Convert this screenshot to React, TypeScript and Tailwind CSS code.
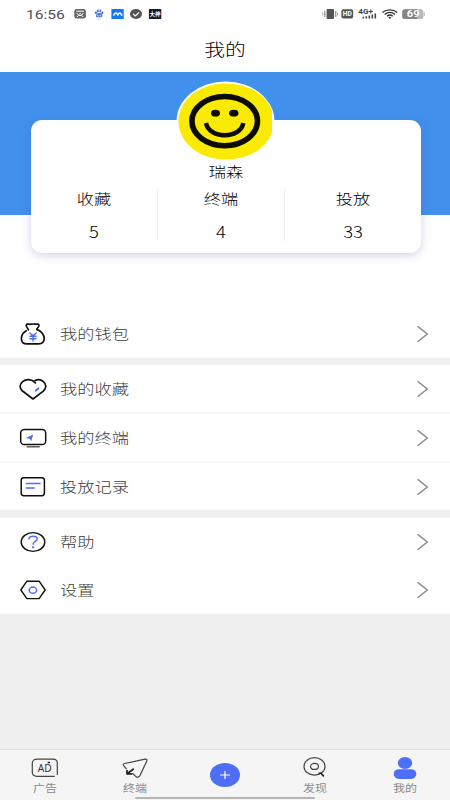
import type { ReactNode } from 'react'

type MenuItem = {
  label: string
  icon: ReactNode
  className: string
}

const ink = '#111111'
const accent = '#4f6ef7'

function WalletIcon() {
  return (
    <svg width="28" height="24" viewBox="0 0 28 24" fill="none" stroke={ink} strokeWidth="1.7" strokeLinecap="round" strokeLinejoin="round">
      <path d="M9.4 7.8 L7.6 4.6 C6.6 2.8 7.6 2 9 2.2 C11 2.6 12 2 14 2 C16 2 16.6 2.4 18.2 2.1 C20 1.9 20.4 3.2 19.6 4.6 L17.8 7.3" />
      <path d="M7.2 8.8 C4 10.8 2.4 13.6 2.4 16.4 C2.4 20 4.4 21.9 7.8 21.9 H19.6 C23.2 21.9 25.2 20 25.2 16.6 C25.2 13.2 22.6 9 18 7.6" />
      <g stroke={accent} strokeWidth="1.5">
        <path d="M10.8 11 L14 13.8 L17.2 11 M14 13.8 V19 M11 14.3 H17 M11 16.8 H17" />
      </g>
    </svg>
  )
}

function HeartIcon() {
  return (
    <svg width="28" height="24" viewBox="0 0 28 24" fill="none" stroke={ink} strokeWidth="1.7" strokeLinecap="round" strokeLinejoin="round">
      <path d="M16.4 5.8 C12.5 1.6 6.8 1.9 3.6 4.6 C0.2 7.4 0.4 11.2 3.2 13.8 L14 22 L24.6 13.8 C27.6 11.2 27.4 7 24.4 4.6 C21.6 2.2 17.6 2.2 14.6 4.4" />
      <path d="M16.8 13.6 L19.4 11.4" stroke={accent} strokeWidth="2" />
    </svg>
  )
}

function TerminalIcon() {
  return (
    <svg width="28" height="24" viewBox="0 0 28 24" fill="none">
      <rect x="1.7" y="3.5" width="25" height="15" rx="3.6" stroke={ink} strokeWidth="1.5" />
      <path d="M7.7 20.8 H20.7" stroke="#444" strokeWidth="1.3" />
      <path d="M6.6 11.9 L14.3 8.4 L12.2 15.2 L10.8 12.8 Z" fill={accent} />
    </svg>
  )
}

function RecordIcon() {
  return (
    <svg width="28" height="24" viewBox="0 0 28 24" fill="none">
      <rect x="2.2" y="2.7" width="23.2" height="18" rx="2.6" stroke={ink} strokeWidth="1.5" />
      <path d="M6.8 8.5 H21.6 M6.8 13 H15.8" stroke={accent} strokeWidth="1.6" />
    </svg>
  )
}

function HelpIcon() {
  return (
    <svg width="28" height="24" viewBox="0 0 28 24" fill="none" strokeLinecap="round">
      <ellipse cx="14" cy="12" rx="11.8" ry="9.4" stroke={ink} strokeWidth="1.4" />
      <path d="M10 9 C10 7 11.8 6.2 14.1 6.2 C16.5 6.2 18.2 7.2 18.2 9 C18.2 11.4 14.1 11.4 14.1 14.2" stroke={accent} strokeWidth="1.5" />
      <ellipse cx="14.1" cy="17.2" rx="1.3" ry="1" fill={accent} />
    </svg>
  )
}

function SettingsIcon() {
  return (
    <svg width="28" height="24" viewBox="0 0 28 24" fill="none">
      <path d="M7.9 3.2 H20.1 L26.2 12 L20.1 20.6 H7.9 L1.8 12 Z" stroke={ink} strokeWidth="1.4" strokeLinejoin="round" />
      <ellipse cx="13.9" cy="12.2" rx="3.7" ry="3.1" stroke={accent} strokeWidth="1.5" />
    </svg>
  )
}

const menu: MenuItem[] = [
  { label: '我的钱包', icon: <WalletIcon />, className: 'h-[55px] border-b-[7px] border-[#f0f0f0]' },
  { label: '我的收藏', icon: <HeartIcon />, className: 'h-[49px] border-b-2 border-[#f6f6f6]' },
  { label: '我的终端', icon: <TerminalIcon />, className: 'h-[49px] border-b-2 border-[#f6f6f6]' },
  { label: '投放记录', icon: <RecordIcon />, className: 'h-[55px] border-b-8 border-[#f0f0f0]' },
  { label: '帮助', icon: <HelpIcon />, className: 'h-12' },
  { label: '设置', icon: <SettingsIcon />, className: 'h-12' },
]

const stats = [
  { label: '收藏', value: 5, className: 'w-[126px]' },
  { label: '终端', value: 4, className: 'w-[128px] border-x border-[#ededf0]' },
  { label: '投放', value: 33, className: 'w-[136px]' },
]

function StatusBar() {
  return (
    <div className="flex h-7 items-center justify-between pl-[26px] pr-[25px] text-[#505050]">
      <div className="flex items-center">
        <span className="w-12 origin-left scale-x-[1.2] whitespace-nowrap font-[Roboto] text-[13px] leading-none">16:56</span>
        <svg width="88" height="12" viewBox="0 0 88 12" fill="none">
          <rect x="0.3" y="1" width="11.6" height="9.6" rx="2.4" fill="#666" />
          <path d="M2.4 3.2 H9.8 M3 4.8 C3.3 7.2 5 7.1 6.1 5.2 C7.2 7.1 8.9 7.2 9.2 4.8 M2.9 9 L4.4 7.5 H7.8 L9.3 9" stroke="#fff" strokeWidth="1" />
          <g fill="#3f76e6">
            <ellipse cx="21.9" cy="4.7" rx="1.2" ry="1.3" />
            <ellipse cx="23.9" cy="2.9" rx="1" ry="1.3" />
            <ellipse cx="26.4" cy="2.9" rx="1" ry="1.3" />
            <ellipse cx="28.3" cy="4.9" rx="1.1" ry="1.3" />
            <path d="M25.1 4.7 C23.8 4.7 21.9 6.6 21.9 7.9 C21.9 9.6 23.8 9.2 25.1 9.2 C26.5 9.2 28.5 9.6 28.5 7.9 C28.5 6.6 26.5 4.7 25.1 4.7" />
          </g>
          <path d="M23.6 6.8 V8 H24.8 M26 6.6 V8 H27.2" stroke="#fff" strokeWidth="0.6" />
          <path d="M23.4 11.2 H27" stroke="#f3b4b4" strokeWidth="0.7" />
          <rect x="37.4" y="1" width="12.3" height="10" fill="#1478f5" />
          <path d="M39.4 7.6 C40.2 5.8 41.5 4.8 42.4 5 C43.3 5.2 43.2 7 43.9 6.9 C44.6 6.8 44.5 5.1 45.5 5 C46.6 5 47.4 6.2 47.9 7.8" stroke="#fff" strokeWidth="1.5" />
          <ellipse cx="62" cy="6" rx="6" ry="4.9" fill="#555" />
          <path d="M59.2 6 L61.4 7.9 L65.1 4.4" stroke="#fff" strokeWidth="1.2" />
          <rect x="74.9" y="1" width="12.4" height="10" rx="0.7" fill="#111433" />
          <text x="75.6" y="8" textLength="11" lengthAdjust="spacingAndGlyphs" fontSize="5.3" fontWeight="bold" fill="#fff" fontFamily="Noto Sans CJK SC, sans-serif">大神</text>
        </svg>
      </div>
      <svg width="103" height="14" viewBox="0 0 103 14" fill="none">
        <rect x="4.6" y="2" width="7.4" height="10" rx="0.8" fill="#555" />
        <path d="M2.8 4 V10 M13.8 4 V10" stroke="#777" strokeWidth="1" />
        <path d="M0.8 5.6 V8.4 M15.5 5.6 V8.4" stroke="#999" strokeWidth="0.9" />
        <rect x="19.4" y="2.3" width="11.8" height="9.2" rx="2" fill="#555" />
        <text x="20.8" y="9.3" textLength="9" lengthAdjust="spacingAndGlyphs" fontSize="6.4" fontWeight="bold" fill="#fff" fontFamily="Roboto, sans-serif">HD</text>
        <text x="36.3" y="6.9" textLength="14.5" lengthAdjust="spacingAndGlyphs" fontSize="6.7" fontWeight="bold" fill="#444" fontFamily="Roboto, sans-serif">4G+</text>
        <path d="M41.3 9.7 V11.6 M44.3 9.2 V11.6 M47.3 8.4 V11.6 M50.3 7.4 V11.6 M53.3 6.6 V11.6" stroke="#444" strokeWidth="1.6" />
        <g stroke="#333" strokeWidth="1.3">
          <path d="M60.4 5.4 C64.2 1.9 71.4 1.9 75.2 5.4" />
          <path d="M62.6 7.4 C65.6 4.8 70 4.8 73 7.4" />
          <path d="M64.9 9.3 C66.6 7.8 69 7.8 70.7 9.3" />
        </g>
        <path d="M66.2 10.5 L67.8 9.8 L69.4 10.5 L67.8 12 Z" fill="#333" />
        <rect x="80.3" y="2.3" width="21" height="9.7" rx="2.6" fill="#b8b8b8" />
        <path d="M82.9 2.3 H95 V12 H82.9 C81.4 12 80.3 11 80.3 9.6 V4.7 C80.3 3.3 81.4 2.3 82.9 2.3" fill="#858585" />
        <path d="M102.2 5.3 V9" stroke="#aaa" strokeWidth="1" />
        <text x="84.8" y="10.2" textLength="12.7" lengthAdjust="spacingAndGlyphs" fontSize="8.4" fontWeight="bold" fill="#fff" fontFamily="Roboto, sans-serif">69</text>
      </svg>
    </div>
  )
}

function Avatar() {
  return (
    <svg className="absolute left-[145px] top-[-39px]" width="99" height="82" viewBox="0 0 99 82" fill="none">
      <ellipse cx="49.5" cy="40.2" rx="49" ry="39.7" fill="#fff" />
      <path d="M96 30 V51 C91 67.5 72 78.5 49.5 78.5 C23 78.5 2.5 61.2 2.5 40.2 C2.5 19.2 23 2.4 49.5 2.4 C72 2.4 90 13.2 96 30" fill="#fbea03" />
      <ellipse cx="48.7" cy="40.1" rx="32.8" ry="24.6" stroke="#0c0c05" strokeWidth="5.6" />
      <ellipse cx="39.5" cy="32.2" rx="4.5" ry="3.4" fill="#0c0c05" />
      <ellipse cx="57.8" cy="32.2" rx="4.7" ry="3.4" fill="#0c0c05" />
      <path d="M30 42 C31.5 49.3 39 54.3 48.5 54.3 C58.5 54.3 66 49.3 67.3 42" stroke="#0c0c05" strokeWidth="4.4" />
    </svg>
  )
}

function ProfileCard() {
  return (
    <div className="relative ml-[31px] h-[133.5px] w-[390px] rounded-[11px] bg-white pt-[42px] shadow-[0_2px_10px_rgba(75,65,170,0.25)]">
      <Avatar />
      <p className="scale-x-[1.23] text-center text-sm font-light leading-[18px] text-black">瑞森</p>
      <div className="mt-2 flex">
        {stats.map((stat) => (
          <div key={stat.label} className={`h-[53px] text-center text-sm font-light text-black ${stat.className}`}>
            <p className="scale-x-[1.23] leading-[21px]">{stat.label}</p>
            <p className="mt-[11px] scale-x-[1.15] text-base leading-[22px]">{stat.value}</p>
          </div>
        ))}
      </div>
    </div>
  )
}

function MenuRow({ item }: { item: MenuItem }) {
  return (
    <button type="button" className={`flex w-full items-center bg-white pl-[19px] pr-[21px] text-left ${item.className}`}>
      {item.icon}
      <span className="ml-[13px] origin-left scale-x-[1.23] pb-0.5 text-sm font-light leading-5 text-[#3c3c3c]">{item.label}</span>
      <svg className="ml-auto" width="13" height="18" viewBox="0 0 13 18" fill="none">
        <path d="M1.6 1.2 L11.3 9 L1.6 16.8" stroke="#858585" strokeWidth="1.4" />
      </svg>
    </button>
  )
}

function TabLabel({ children }: { children: string }) {
  return <span className="scale-x-[1.2] text-[10px] leading-3 text-[#8a8a8a]">{children}</span>
}

function TabBar() {
  return (
    <nav className="relative flex h-[51px] border-t border-[#dedede] bg-[#f5f5f5]">
      <div className="flex w-[90px] flex-col items-center pt-[5px]">
        <svg width="28" height="27" viewBox="0 0 28 27" fill="none" stroke="#444" strokeWidth="1.2">
          <path d="M23.8 21.3 H6 C3.1 21.3 1.3 19.9 1.3 17.6 V8 C1.3 5.6 3.2 4.1 6 4.1 H21.8 C24.7 4.1 26.3 5.6 26.3 8 V20" />
          <text x="6.8" y="17.4" textLength="14" lengthAdjust="spacingAndGlyphs" fontSize="10.8" fill="#333" stroke="none" fontFamily="Noto Sans, sans-serif">AD</text>
          <ellipse cx="17.8" cy="7.5" rx="1.3" ry="1" fill="#333" stroke="none" />
        </svg>
        <TabLabel>广告</TabLabel>
      </div>
      <div className="flex w-[90px] flex-col items-center pt-[5px]">
        <svg width="28" height="27" viewBox="0 0 28 27" fill="none" stroke="#444" strokeWidth="1.2" strokeLinejoin="round">
          <path d="M5.6 14 L2.8 10.8 C1.9 9.6 2.2 8.9 3.8 8.5 L24 4.2 C25.5 3.9 26.4 4.6 25.8 5.9 L19 20.6 C18.1 22.5 16.5 22.6 14.8 21.4 L11.3 18.3" />
          <path d="M12.8 13.8 L6 18.8 M6 15 V18.9 H11.2" stroke="#222" strokeWidth="1.7" />
        </svg>
        <TabLabel>终端</TabLabel>
      </div>
      <div className="flex w-[90px] justify-center pt-[13px]">
        <svg width="30" height="24" viewBox="0 0 30 24" fill="none">
          <ellipse cx="15" cy="12" rx="15" ry="12" fill={accent} />
          <path d="M10 12 H20 M15 8 V16" stroke="#fff" strokeWidth="1.2" />
        </svg>
      </div>
      <div className="flex w-[90px] flex-col items-center pt-[5px]">
        <svg width="28" height="27" viewBox="0 0 28 27" fill="none" stroke="#444" strokeWidth="1.2">
          <ellipse cx="13.5" cy="11.4" rx="10.5" ry="8.7" />
          <ellipse cx="13.5" cy="11.4" rx="3.9" ry="3" />
          <path d="M17.6 18.2 H20 L22.8 21.4" stroke="#222" strokeWidth="1.6" />
        </svg>
        <TabLabel>发现</TabLabel>
      </div>
      <div className="flex w-[90px] flex-col items-center pt-[5px]">
        <svg width="28" height="27" viewBox="0 0 28 27" fill={accent}>
          <ellipse cx="14" cy="7.9" rx="7.2" ry="6" />
          <rect x="2.7" y="14.2" width="22.6" height="9.7" rx="5.2" />
        </svg>
        <TabLabel>我的</TabLabel>
      </div>
      {/* System gesture bar */}
      <div className="absolute left-[135px] top-[47px] h-0.5 w-[180px] rounded-full bg-[#b5b5b5]" />
    </nav>
  )
}

export default function App() {
  return (
    <div className="flex h-[800px] w-[450px] flex-col overflow-hidden bg-[#f0f0f0] font-['Noto_Sans_CJK_SC',sans-serif]">
      <header className="h-[72px] bg-white">
        <StatusBar />
        <h1 className="scale-x-[1.22] pt-2 text-center text-[17px] font-light leading-[26px] text-black">我的</h1>
      </header>

      <section className="h-[238px] bg-[linear-gradient(#4191ec_143px,#fff_143px)] pt-[47.5px]">
        <ProfileCard />
      </section>

      <main>
        {menu.map((item) => (
          <MenuRow key={item.label} item={item} />
        ))}
      </main>

      <div className="flex-1" />
      <TabBar />
    </div>
  )
}
